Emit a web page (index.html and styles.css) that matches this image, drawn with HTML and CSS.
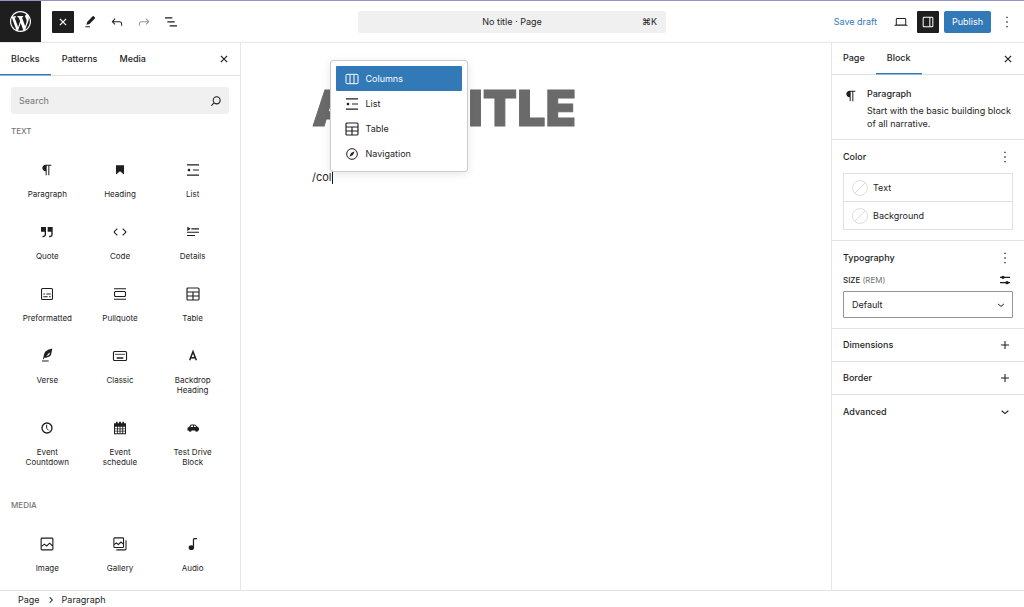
FILE: index.html
```
<!DOCTYPE html>
<html lang="en">
<head>
    <meta charset="UTF-8">
    <title>No title · Page</title>
    <link rel="stylesheet" href="styles.css">
</head>
<body>
<svg class="sprite" aria-hidden="true">
    <symbol id="i-wp" viewBox="0 0 20 20"><path d="M20 10c0-5.51-4.49-10-10-10C4.48 0 0 4.49 0 10c0 5.52 4.48 10 10 10 5.51 0 10-4.48 10-10zM7.78 15.37L4.37 6.22c.55-.02 1.17-.08 1.17-.08.5-.06.44-1.13-.06-1.11 0 0-1.45.11-2.37.11-.18 0-.37 0-.58-.01C4.12 2.69 6.87 1.11 10 1.11c2.33 0 4.45.87 6.05 2.34-.68-.11-1.65.39-1.65 1.58 0 .74.45 1.36.9 2.1.35.61.55 1.36.55 2.46 0 1.49-1.4 5-1.4 5l-3.03-8.37c.54-.02.82-.17.82-.17.5-.05.44-1.25-.06-1.22 0 0-1.44.12-2.38.12-.87 0-2.33-.12-2.33-.12-.5-.03-.56 1.2-.06 1.22l.92.08 1.26 3.41zM17.41 10c.24-.64.74-1.87.43-4.25.7 1.29 1.05 2.71 1.05 4.25 0 3.29-1.73 6.24-4.4 7.78.97-2.59 1.94-5.2 2.92-7.78zM6.1 18.09C3.12 16.65 1.11 13.53 1.11 10c0-1.3.23-2.48.72-3.59C3.25 10.3 4.67 14.2 6.1 18.09zm4.03-6.63l2.58 6.98c-.86.29-1.76.45-2.71.45-.79 0-1.57-.11-2.29-.33.81-2.38 1.62-4.74 2.42-7.1z"/></symbol>
    <symbol id="i-close" viewBox="0 0 24 24"><path d="M7.3 7.3l9.4 9.4M16.7 7.3l-9.4 9.4" fill="none" stroke="currentColor" stroke-width="1.8"/></symbol>
    <symbol id="i-edit" viewBox="0 0 24 24"><path d="M20 6l-3.200-3.200L8 11.500l-1.500 4.800 4.800-1.300L20 6zm-8 12.500H5V20h7v-1.500z"/></symbol>
    <symbol id="i-undo" viewBox="0 0 24 24"><path d="M18.3 11.7c-.6-.6-1.4-.9-2.3-.9H6.7l2.9-3.3-1.1-1-4.5 5L8.5 16l1-1-2.7-2.7H16c.5 0 .9.2 1.3.5 1 1 1 3.4 1 4.5v.3h1.5v-.2c0-1.5 0-4.3-1.5-5.7z"/></symbol>
    <symbol id="i-redo" viewBox="0 0 24 24"><path d="M15.6 6.5l-1.1 1 2.9 3.3H8c-.9 0-1.7.3-2.3.9-1.4 1.5-1.4 4.2-1.4 5.6v.2h1.5v-.3c0-1.1 0-3.5 1-4.5.3-.3.7-.5 1.3-.5h9.2L14.5 15l1.1 1.1 4.6-4.6-4.6-5z"/></symbol>
    <symbol id="i-listview" viewBox="0 0 24 24"><path d="M3 5h11v1.6H3V5zm3.500 6h11v1.600h-11V11zM21 17H10v1.600H21V17z"/></symbol>
    <symbol id="i-laptop" viewBox="0 0 24 24"><path d="M20.5 16h-.7V8c0-1.1-.9-2-2-2H6.2c-1.1 0-2 .9-2 2v8h-.7c-.8 0-1.5.7-1.5 1.5h20c0-.8-.7-1.5-1.5-1.5zM5.7 8c0-.3.2-.5.5-.5h11.6c.3 0 .5.2.5.5v7.6H5.7V8z"/></symbol>
    <symbol id="i-drawer" viewBox="0 0 24 24"><path d="M18 4H6c-1.1 0-2 .9-2 2v12c0 1.1.9 2 2 2h12c1.1 0 2-.9 2-2V6c0-1.1-.9-2-2-2zm-4 14.5H6c-.3 0-.5-.2-.5-.5V6c0-.3.2-.5.5-.5h8v13zm4.500-.5c0 .3-.2.5-.5.5h-2.500v-13H18c.3 0 .5.2.5.5v12z"/></symbol>
    <symbol id="i-more" viewBox="0 0 24 24"><path d="M13 20h-2v-2h2v2zm0-7h-2v-2h2v2zm0-7h-2V4h2v2z"/></symbol>
    <symbol id="i-search" viewBox="0 0 24 24"><path d="M13 5c-3.3 0-6 2.7-6 6 0 1.4.5 2.7 1.3 3.7l-3.8 3.8 1.1 1.1 3.8-3.8c1 .8 2.3 1.3 3.7 1.3 3.3 0 6-2.7 6-6S16.3 5 13 5zm0 10.5c-2.5 0-4.5-2-4.5-4.5s2-4.5 4.5-4.5 4.5 2 4.5 4.5-2 4.5-4.5 4.5z"/></symbol>
    <symbol id="i-paragraph" viewBox="0 0 24 24"><path d="M10 14v6h1.500V5.500H14V20h1.500V5.500h3V4H10c-2.800 0-5 2.200-5 5s2.200 5 5 5z"/></symbol>
    <symbol id="i-heading" viewBox="0 0 24 24"><path d="M6 5v13.600l6-4.700 6 4.700V5H6z"/></symbol>
    <symbol id="i-list" viewBox="0 0 24 24"><path d="M3 3.500v1.700h18V3.500H3zm9 9.300h9v-1.700h-9v1.700zM3 20.500h18v-1.700H3v1.700zM8 12c0-1.100-.9-2-2-2s-2 .9-2 2 .9 2 2 2 2-.9 2-2z"/></symbol>
    <symbol id="i-quote" viewBox="0 0 24 24"><path d="M13 4.500v7h5.500v4c0 .8-.2 1.400-.5 1.700-.6.6-1.600.6-2.500.5h-.3v2h.5c1 0 2.600-.1 3.600-1 .9-.8 1.200-1.800 1.200-3V4.500H13zM3 11.500h5.500v4c0 .8-.2 1.400-.5 1.700-.6.6-1.600.6-2.500.5h-.3v2h.5c1 0 2.600-.1 3.600-1 .9-.8 1.200-1.800 1.200-3V4.500H3v7z"/></symbol>
    <symbol id="i-code" viewBox="0 0 24 24"><path d="M8 6.800L3.400 11.400q-.6.600 0 1.200L8 17.200M16 6.800l4.600 4.600q.6.600 0 1.200L16 17.200" fill="none" stroke="currentColor" stroke-width="1.600"/></symbol>
    <symbol id="i-details" viewBox="0 0 24 24"><path d="M3 16.500h12v1.600H3v-1.600zm0-5h18v1.600H3v-1.600zM9.500 6.500H21v1.600H9.500V6.500zM3.500 4l5 3.300-5 3.200z"/></symbol>
    <symbol id="i-preformatted" viewBox="0 0 24 24"><rect x="3.800" y="3.800" width="16.400" height="16.400" rx="1.500" fill="none" stroke="currentColor" stroke-width="1.600"/><path d="M6.500 16.800h6.500v-1.600H6.500v1.600zm4.500-4h6.500v-1.600H11v1.600zm-2-1.600H6.500v1.600H9v-1.600zm6 5.600h2.500v-1.600H15v1.600z"/></symbol>
    <symbol id="i-pullquote" viewBox="0 0 24 24"><rect x="3.800" y="8.200" width="16.400" height="7.600" rx="1.500" fill="none" stroke="currentColor" stroke-width="1.600"/><path d="M3 3.200v1.600h18V3.200H3zm0 17.600h18v-1.600H3v1.600z"/></symbol>
    <symbol id="i-table" viewBox="0 0 24 24"><path d="M4.600 3h14.800q1.600 0 1.600 1.600v14.800q0 1.600-1.600 1.600H4.600Q3 21 3 19.400V4.600Q3 3 4.600 3zM3 9h18M3 15h18M12 9v12" fill="none" stroke="currentColor" stroke-width="1.700"/></symbol>
    <symbol id="i-verse" viewBox="0 0 24 24"><path d="M19.800 1l-.9.300c-.1 0-4.600 1-6.200 2.100C11 4.500 9.300 5.500 8.700 6.600c-.6.900-1.900 5.200-1.900 6.800l-.9 2.300c-.2.400 0 .8.400 1 .1 0 .2.100.3.100.3 0 .6-.2.700-.5l.6-1.500c.3 0 .7-.1 1.200-.2.700-.1 1.900-.3 2.700-.5.8-.2 2-.5 2.800-.8.700-.3 1.500-.7 2-1.200s1.200-1.200 1.500-2.400c.2-.7.500-1.600.6-2.400.2-2 .8-3.800 1.100-5.300V1zm-3.900 7.600c-.1.800-.2 1-.6 1.700-.3.300-.8.600-1.400.9-.7.300-1.400.8-3.200 1L16 6.500zM4.500 20.300h10v-1.600h-10v1.600z"/></symbol>
    <symbol id="i-classic" viewBox="0 0 24 24"><rect x="2.200" y="5.200" width="19.600" height="13.600" rx="1.500" fill="none" stroke="currentColor" stroke-width="1.700"/><path d="M10 8.500H8v2h2v-2zm-5 2h2v-2H5v2zm8-2h-2v2h2v-2zM7 16h10v-2H7v2zm7-5.500h2v-2h-2v2zm3 0h2v-2h-2v2z"/></symbol>
    <symbol id="i-backdrop" viewBox="0 0 24 24"><path d="M7 18.500L12 5.500l5 13M8.800 14.500h6.400" fill="none" stroke="currentColor" stroke-width="2.200"/></symbol>
    <symbol id="i-clock" viewBox="0 0 24 24"><circle cx="12" cy="12" r="7.500" fill="none" stroke="currentColor" stroke-width="2"/><path d="M11.500 7v5.500l3 3" fill="none" stroke="currentColor" stroke-width="1.500"/></symbol>
    <symbol id="i-calendar" viewBox="0 0 24 24"><path d="M3 5h3V2.500h2.500V5h2V2.500h3V5h2V2.500H18V5h3v16.500H3z"/><path d="M4.500 10h3v2.600h-3zm4.200 0h2.700v2.600H8.700zm4 0h2.700v2.600h-2.700zm4 0h2.800v2.600h-2.800zM4.500 13.700h3v2.600h-3zm4.200 0h2.700v2.600H8.700zm4 0h2.700v2.600h-2.700zm4 0h2.800v2.600h-2.800zM4.500 17.400h3V20h-3zm4.200 0h2.700V20H8.700zm4 0h2.700V20h-2.700zm4 0h2.800V20h-2.800z" fill="#fff"/></symbol>
    <symbol id="i-car" viewBox="0 0 24 24"><path fill-rule="evenodd" d="M3.700 12.500q0-1.800 2.500-2L8 7.500q.5-.8 1.500-.8h4.800q1 0 1.700.7l3 3.100q2 .3 2 2.300v3h-1.300a2.300 2.300 0 0 1-4.500 0H10a2.300 2.300 0 0 1-4.500 0H3.700zM8.200 10.500H12V8.200H9.500zm5.300 0h3.300l-2-2.300h-1.300z"/></symbol>
    <symbol id="i-image" viewBox="0 0 24 24"><rect x="3.200" y="3.200" width="17.600" height="17.600" rx="1.300" fill="none" stroke="currentColor" stroke-width="1.700"/><path d="M4 15.500l4-3.200 3.500 2.700 4.500-4.300 4.500 4.300" fill="none" stroke="currentColor" stroke-width="1.600"/></symbol>
    <symbol id="i-gallery" viewBox="0 0 24 24"><rect x="2.800" y="2.800" width="14.500" height="14.500" rx="1.300" fill="none" stroke="currentColor" stroke-width="1.600"/><path d="M3 13l3.500-2.500 3 2.200L13.500 9l4 3.500M21 6.500v13q0 1.300-1.300 1.300H6.500" fill="none" stroke="currentColor" stroke-width="1.600"/></symbol>
    <symbol id="i-audio" viewBox="0 0 24 24"><ellipse cx="9.500" cy="17.500" rx="4" ry="3.500"/><path d="M12.700 17.500V5.500q0-1.500 1.500-1.500H18" fill="none" stroke="currentColor" stroke-width="1.800"/></symbol>
    <symbol id="i-columns" viewBox="0 0 24 24"><path d="M4.500 5h15q1.500 0 1.500 1.500v11q0 1.500-1.500 1.500h-15Q3 19 3 17.500v-11Q3 5 4.500 5zM9 5v14M15 5v14" fill="none" stroke="currentColor" stroke-width="1.500"/></symbol>
    <symbol id="i-compass" viewBox="0 0 24 24"><circle cx="12" cy="12" r="8" fill="none" stroke="currentColor" stroke-width="1.500"/><path d="M16 8l-2.600 5.400L8 16l2.600-5.400z"/></symbol>
    <symbol id="i-sliders" viewBox="0 0 24 24"><path d="M4.500 8h15M4.500 16h15" fill="none" stroke="currentColor" stroke-width="1.800"/><circle cx="9" cy="8" r="2.500"/><circle cx="15" cy="16" r="2.500"/></symbol>
    <symbol id="i-plus" viewBox="0 0 24 24"><path d="M12 6v12M6 12h12" fill="none" stroke="currentColor" stroke-width="1.600"/></symbol>
    <symbol id="i-down" viewBox="0 0 24 24"><path d="M7 10.200l5 4.200 5-4.200" fill="none" stroke="currentColor" stroke-width="1.700"/></symbol>
    <symbol id="i-right" viewBox="0 0 24 24"><path d="M9.500 6.500l5 5.500-5 5.500" fill="none" stroke="currentColor" stroke-width="2.200"/></symbol>
</svg>

<div class="editor">
    <header class="header">
        <a class="logo" href="#" aria-label="View pages"><svg><use href="#i-wp"/></svg></a>
        <div class="tools">
            <button class="tool dark" aria-label="Toggle block inserter"><svg><use href="#i-close"/></svg></button>
            <button class="tool" aria-label="Tools"><svg><use href="#i-edit"/></svg></button>
            <button class="tool" aria-label="Undo"><svg><use href="#i-undo"/></svg></button>
            <button class="tool" aria-label="Redo" disabled><svg><use href="#i-redo"/></svg></button>
            <button class="tool" aria-label="Document overview"><svg><use href="#i-listview"/></svg></button>
        </div>
        <button class="doc-bar">
            <span class="doc-title">No title · Page</span>
            <span class="shortcut">⌘K</span>
        </button>
        <div class="actions">
            <button class="save">Save draft</button>
            <button class="tool" aria-label="View"><svg><use href="#i-laptop"/></svg></button>
            <button class="tool dark" aria-label="Settings"><svg><use href="#i-drawer"/></svg></button>
            <button class="publish">Publish</button>
            <button class="dots" aria-label="Options"><svg><use href="#i-more"/></svg></button>
        </div>
    </header>

    <div class="body">
        <aside class="inserter">
            <div class="tabs inserter-tabs">
                <button class="tab active">Blocks</button>
                <button class="tab">Patterns</button>
                <button class="tab">Media</button>
                <button class="tabs-close" aria-label="Close"><svg><use href="#i-close"/></svg></button>
            </div>
            <div class="search">
                <input type="search" placeholder="Search" aria-label="Search">
                <svg><use href="#i-search"/></svg>
            </div>
            <h2 class="group">Text</h2>
            <div class="blocks">
                <button class="block"><svg><use href="#i-paragraph"/></svg>Paragraph</button>
                <button class="block"><svg><use href="#i-heading"/></svg>Heading</button>
                <button class="block"><svg><use href="#i-list"/></svg>List</button>
                <button class="block"><svg><use href="#i-quote"/></svg>Quote</button>
                <button class="block"><svg><use href="#i-code"/></svg>Code</button>
                <button class="block"><svg><use href="#i-details"/></svg>Details</button>
                <button class="block"><svg><use href="#i-preformatted"/></svg>Preformatted</button>
                <button class="block"><svg><use href="#i-pullquote"/></svg>Pullquote</button>
                <button class="block"><svg><use href="#i-table"/></svg>Table</button>
                <button class="block"><svg><use href="#i-verse"/></svg>Verse</button>
                <button class="block"><svg><use href="#i-classic"/></svg>Classic</button>
                <button class="block"><svg><use href="#i-backdrop"/></svg>Backdrop Heading</button>
                <button class="block"><svg><use href="#i-clock"/></svg>Event Countdown</button>
                <button class="block"><svg><use href="#i-calendar"/></svg>Event schedule</button>
                <button class="block"><svg><use href="#i-car"/></svg>Test Drive Block</button>
            </div>
            <h2 class="group">Media</h2>
            <div class="blocks">
                <button class="block"><svg><use href="#i-image"/></svg>Image</button>
                <button class="block"><svg><use href="#i-gallery"/></svg>Gallery</button>
                <button class="block"><svg><use href="#i-audio"/></svg>Audio</button>
            </div>
        </aside>

        <main class="canvas">
            <div class="content">
                <h1 class="title">Add title</h1>
                <div class="para">
                    <span class="typed">/col</span>
                    <div class="popover" role="listbox" aria-label="Blocks">
                        <button class="option selected" role="option" aria-selected="true"><svg><use href="#i-columns"/></svg>Columns</button>
                        <button class="option" role="option"><svg><use href="#i-list"/></svg>List</button>
                        <button class="option" role="option"><svg><use href="#i-table"/></svg>Table</button>
                        <button class="option" role="option"><svg><use href="#i-compass"/></svg>Navigation</button>
                    </div>
                </div>
            </div>
        </main>

        <aside class="settings">
            <div class="tabs">
                <button class="tab">Page</button>
                <button class="tab active">Block</button>
                <button class="tabs-close" aria-label="Close settings"><svg><use href="#i-close"/></svg></button>
            </div>
            <section class="card">
                <svg><use href="#i-paragraph"/></svg>
                <div>
                    <h2>Paragraph</h2>
                    <p>Start with the basic building block of all narrative.</p>
                </div>
            </section>
            <section class="panel">
                <div class="panel-head">
                    <h2>Color</h2>
                    <button class="dots" aria-label="Color options"><svg><use href="#i-more"/></svg></button>
                </div>
                <div class="colors">
                    <button class="color"><span class="swatch"></span>Text</button>
                    <button class="color"><span class="swatch"></span>Background</button>
                </div>
            </section>
            <section class="panel">
                <div class="panel-head">
                    <h2>Typography</h2>
                    <button class="dots" aria-label="Typography options"><svg><use href="#i-more"/></svg></button>
                </div>
                <div class="size-head">
                    <label for="size">Size <span>(rem)</span></label>
                    <button class="dots" aria-label="Set custom size"><svg><use href="#i-sliders"/></svg></button>
                </div>
                <div class="select">
                    <select id="size"><option>Default</option></select>
                    <svg><use href="#i-down"/></svg>
                </div>
            </section>
            <button class="fold">Dimensions<svg><use href="#i-plus"/></svg></button>
            <button class="fold">Border<svg><use href="#i-plus"/></svg></button>
            <button class="fold">Advanced<svg><use href="#i-down"/></svg></button>
        </aside>
    </div>

    <footer class="footer">
        <button>Page</button>
        <svg><use href="#i-right"/></svg>
        <span>Paragraph</span>
    </footer>
</div>
</body>
</html>
```
FILE: styles.css
```
*{
    box-sizing: border-box;
    margin: 0;
    padding: 0;
}
body{
    font: 9px/12px Inter, "Noto Sans", sans-serif;
    color: #1e1e1e;
    background: #fff;
}
button, input, select{
    font: inherit;
    color: inherit;
    background: none;
    border: 0;
    border-radius: 0;
}
button{
    cursor: pointer;
}
svg{
    display: block;
    flex: none;
    width: 16px;
    height: 16px;
    fill: currentColor;
}
.sprite{
    position: absolute;
    width: 0;
    height: 0;
}
.editor{
    display: flex;
    flex-direction: column;
    height: 100vh;
    overflow: hidden;
    border-top: 1px solid #9a8fc6;
}

/* header */
.header{
    flex: none;
    display: grid;
    grid-template-columns: 1fr 308px 1fr;
    align-items: center;
    height: 42px;
    border-bottom: 1px solid #e6e6e6;
}
.logo{
    grid-column: 1;
    grid-row: 1;
    display: flex;
    align-items: center;
    justify-content: center;
    width: 41px;
    height: 41px;
    background: #1e1e1e;
    color: #fff;
}
.logo svg{
    width: 21px;
    height: 21px;
}
.tools{
    grid-column: 1;
    grid-row: 1;
    display: flex;
    gap: 5px;
    margin-left: 52px;
}
.tool{
    display: flex;
    align-items: center;
    justify-content: center;
    width: 22px;
    height: 22px;
    border-radius: 1px;
}
.tool:disabled{
    color: #949494;
}
.dark{
    background: #1e1e1e;
    color: #fff;
}
.doc-bar{
    grid-column: 2;
    grid-row: 1;
    display: grid;
    grid-template-columns: 1fr auto 1fr;
    align-items: center;
    height: 22px;
    padding: 0 9px;
    background: #f0f0f0;
    border-radius: 2px;
}
.doc-title{
    grid-column: 2;
}
.shortcut{
    text-align: right;
}
.actions{
    grid-column: 3;
    grid-row: 1;
    display: flex;
    align-items: center;
    justify-content: flex-end;
    gap: 5px;
    padding-right: 9px;
}
.save{
    color: #3279b7;
    margin-right: 8px;
}
.publish{
    height: 22px;
    padding: 0 8px;
    color: #fff;
    background: #3279b7;
    border-radius: 2px;
}
.actions .dots{
    margin-left: 3px;
}

/* columns */
.body{
    flex: 1;
    display: flex;
    min-height: 0;
}
.inserter{
    flex: none;
    width: 241px;
    overflow: hidden;
    border-right: 1px solid #e6e6e6;
}
.settings{
    flex: none;
    width: 193px;
    overflow: hidden;
    border-left: 1px solid #e6e6e6;
}
.canvas{
    flex: 1;
    padding: 0 16px;
}

/* tabs */
.tabs{
    display: flex;
    border-bottom: 1px solid #e2e2e2;
    height: 32px;
}
.inserter-tabs{
    height: 33px;
}
.tab{
    padding: 0 11px;
    border-bottom: 1px solid transparent;
    font-weight: 500;
}
.tab.active{
    border-bottom: 1px solid #3279b7;
    box-shadow: 0 1px #8fb5d8;
}
.tabs-close{
    margin-left: auto;
    padding: 0 8px;
}

/* inserter */
.search{
    display: flex;
    align-items: center;
    height: 27px;
    margin: 11px;
    padding: 0 5px 0 8px;
    background: #f0f0f0;
    border-radius: 2px;
}
.search input{
    flex: 1;
    min-width: 0;
    outline: 0;
}
.search input::placeholder{
    color: #757575;
}
.group{
    margin: 12px 11px 20px;
    font-size: 8px;
    line-height: 12px;
    font-weight: 500;
    color: #757575;
    text-transform: uppercase;
}
.search + .group{
    margin-top: 11px;
}
.blocks{
    display: grid;
    grid-template-columns: repeat(3, 1fr);
    padding: 0 11px;
}
.block{
    display: flex;
    flex-direction: column;
    align-items: center;
    gap: 11px;
    padding: 5px 10px 20px;
    font-size: 8px;
    line-height: 10px;
}

/* canvas */
.content{
    max-width: 448px;
    margin: 0 auto;
    padding-top: 33px;
}
.title{
    font-size: 50px;
    line-height: 64px;
    font-weight: 900;
    color: #6a6a6a;
    -webkit-text-stroke: 1px #6a6a6a;
    text-transform: uppercase;
    white-space: nowrap;
}
.para{
    position: relative;
    display: inline-block;
    margin-top: 30px;
    font-size: 11px;
}
.typed{
    display: block;
    line-height: 14px;
    border-right: 1px solid #1e1e1e;
}
.popover{
    position: absolute;
    left: calc(100% - 3px);
    bottom: calc(100% - 2px);
    width: 138px;
    padding: 5px;
    background: #fff;
    border: 1px solid #ccc;
    border-radius: 3px;
    box-shadow: 0 2px 8px rgba(0,0,0,.1);
    font-size: 9px;
}
.option{
    display: flex;
    align-items: center;
    gap: 6px;
    width: 100%;
    height: 25px;
    padding: 0 8px;
    border-radius: 1px;
}
.option.selected{
    color: #fff;
    background: #3279b7;
}

/* settings */
.settings h2{
    font-size: 9px;
    line-height: 12px;
    font-weight: 500;
}
.card{
    display: flex;
    gap: 8px;
    padding: 13px 11px 9px;
    border-bottom: 1px solid #e2e2e2;
}
.card p{
    margin-top: 4px;
    line-height: 13px;
}
.panel{
    padding: 9px 11px 10px;
    border-bottom: 1px solid #e2e2e2;
}
.panel-head, .size-head{
    display: flex;
    align-items: center;
    justify-content: space-between;
}
.colors{
    margin-top: 8px;
    border: 1px solid #e2e2e2;
}
.color{
    display: flex;
    align-items: center;
    gap: 5px;
    width: 100%;
    height: 27px;
    padding: 0 8px;
}
.color + .color{
    height: 28px;
    border-top: 1px solid #e2e2e2;
}
.swatch{
    width: 16px;
    height: 16px;
    border: 1px solid #ddd;
    border-radius: 50%;
    background: linear-gradient(-45deg, transparent 48%, #ddd 48%, #ddd 52%, transparent 52%);
}
.size-head{
    margin-top: 6px;
    font-size: 8px;
    font-weight: 500;
    text-transform: uppercase;
}
.size-head span{
    font-weight: 400;
    color: #757575;
}
.select{
    display: grid;
    align-items: center;
    margin-top: 3px;
}
.select select, .select svg{
    grid-area: 1 / 1;
}
.select select{
    appearance: none;
    height: 27px;
    padding: 0 8px;
    border: 1px solid #949494;
    border-radius: 1px;
}
.select svg{
    justify-self: end;
    width: 14px;
    height: 14px;
    margin-right: 5px;
    pointer-events: none;
}
.fold{
    display: flex;
    align-items: center;
    justify-content: space-between;
    width: 100%;
    height: 33px;
    padding: 0 11px;
    font-weight: 500;
    border-bottom: 1px solid #e2e2e2;
}
.fold:last-child{
    border-bottom: 0;
}

/* footer */
.footer{
    flex: none;
    display: flex;
    align-items: center;
    gap: 5px;
    height: 17px;
    padding: 1px 18px 0;
    border-top: 1px solid #e2e2e2;
}
.footer svg{
    width: 12px;
    height: 12px;
}
```
